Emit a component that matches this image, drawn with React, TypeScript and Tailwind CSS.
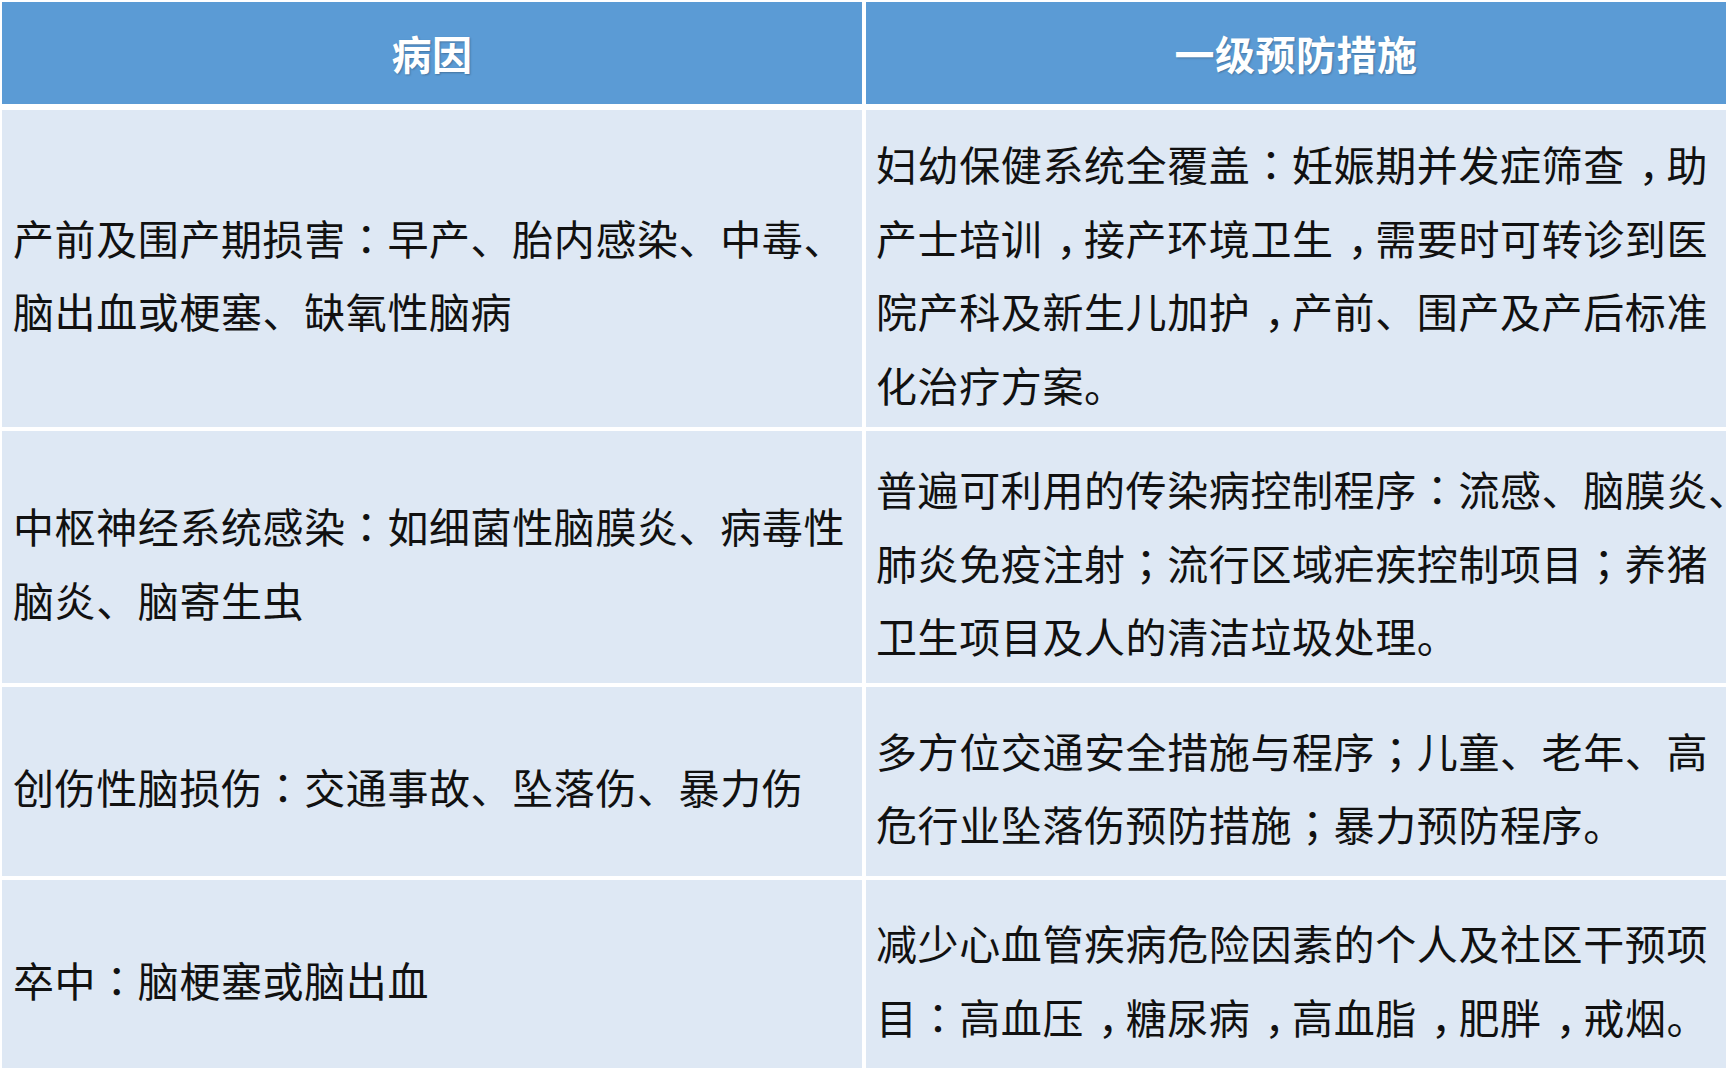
const rows = [
  {
    h: "h-[317px]",
    cause: ["产前及围产期损害：早产、胎内感染、中毒、", "脑出血或梗塞、缺氧性脑病"],
    prevent: [
      "妇幼保健系统全覆盖：妊娠期并发症筛查，助",
      "产士培训，接产环境卫生，需要时可转诊到医",
      "院产科及新生儿加护，产前、围产及产后标准",
      "化治疗方案。",
    ],
  },
  {
    h: "h-[252px]",
    cause: ["中枢神经系统感染：如细菌性脑膜炎、病毒性", "脑炎、脑寄生虫"],
    prevent: [
      "普遍可利用的传染病控制程序：流感、脑膜炎、",
      "肺炎免疫注射；流行区域疟疾控制项目；养猪",
      "卫生项目及人的清洁垃圾处理。",
    ],
  },
  {
    h: "h-[189px]",
    cause: ["创伤性脑损伤：交通事故、坠落伤、暴力伤"],
    prevent: ["多方位交通安全措施与程序；儿童、老年、高", "危行业坠落伤预防措施；暴力预防程序。"],
  },
  {
    h: "h-[188px]",
    cause: ["卒中：脑梗塞或脑出血"],
    prevent: ["减少心血管疾病危险因素的个人及社区干预项", "目：高血压，糖尿病，高血脂，肥胖，戒烟。"],
  },
];

// centred full-width punctuation, as in the slide's font
function Line({ text }: { text: string }) {
  const parts = text.split(/([：，；])/);
  return (
    <div>
      {parts.map((p, i) => {
        if (p === "，")
          return (
            <span key={i} className="relative left-[14px]">
              {p}
            </span>
          );
        if (p === "：" || p === "；")
          return (
            <span key={i} style={{ fontFamily: '"Noto Sans CJK TC", sans-serif' }}>
              {p}
            </span>
          );
        return <span key={i}>{p}</span>;
      })}
    </div>
  );
}

function Cell({ lines, pad }: { lines: string[]; pad: string }) {
  return (
    <div className={`flex items-center bg-[#dee8f4] ${pad} pt-[11px] overflow-visible`}>
      <div className="text-[41px] leading-[73.5px] tracking-[0.6px] text-[#111111] whitespace-nowrap">
        {lines.map((l, i) => (
          <Line key={i} text={l} />
        ))}
      </div>
    </div>
  );
}

export default function App() {
  return (
    <div
      className="w-[1730px] h-[1071px] bg-white pl-[2px] pt-[2px] overflow-hidden"
      style={{ fontFamily: '"Noto Sans CJK SC", "Noto Sans", sans-serif' }}
    >
      <div className="grid grid-cols-[860px_860px] gap-x-[4px] w-[1724px]">
        <div className="h-[102px] bg-[#5b9bd5] flex items-center justify-center text-white font-bold text-[40px] tracking-[0.5px] [text-shadow:1px_1px_2px_rgba(0,0,0,0.25)]">
          病因
        </div>
        <div className="h-[102px] bg-[#5b9bd5] flex items-center justify-center text-white font-bold text-[40px] tracking-[0.5px] [text-shadow:1px_1px_2px_rgba(0,0,0,0.25)]">
          一级预防措施
        </div>
      </div>
      <div className="flex flex-col gap-[4px] mt-[6px] w-[1724px]">
        {rows.map((r, i) => (
          <div key={i} className={`grid grid-cols-[860px_860px] gap-x-[4px] ${r.h}`}>
            <Cell lines={r.cause} pad="pl-[11px]" />
            <Cell lines={r.prevent} pad="pl-[10px]" />
          </div>
        ))}
      </div>
    </div>
  );
}
